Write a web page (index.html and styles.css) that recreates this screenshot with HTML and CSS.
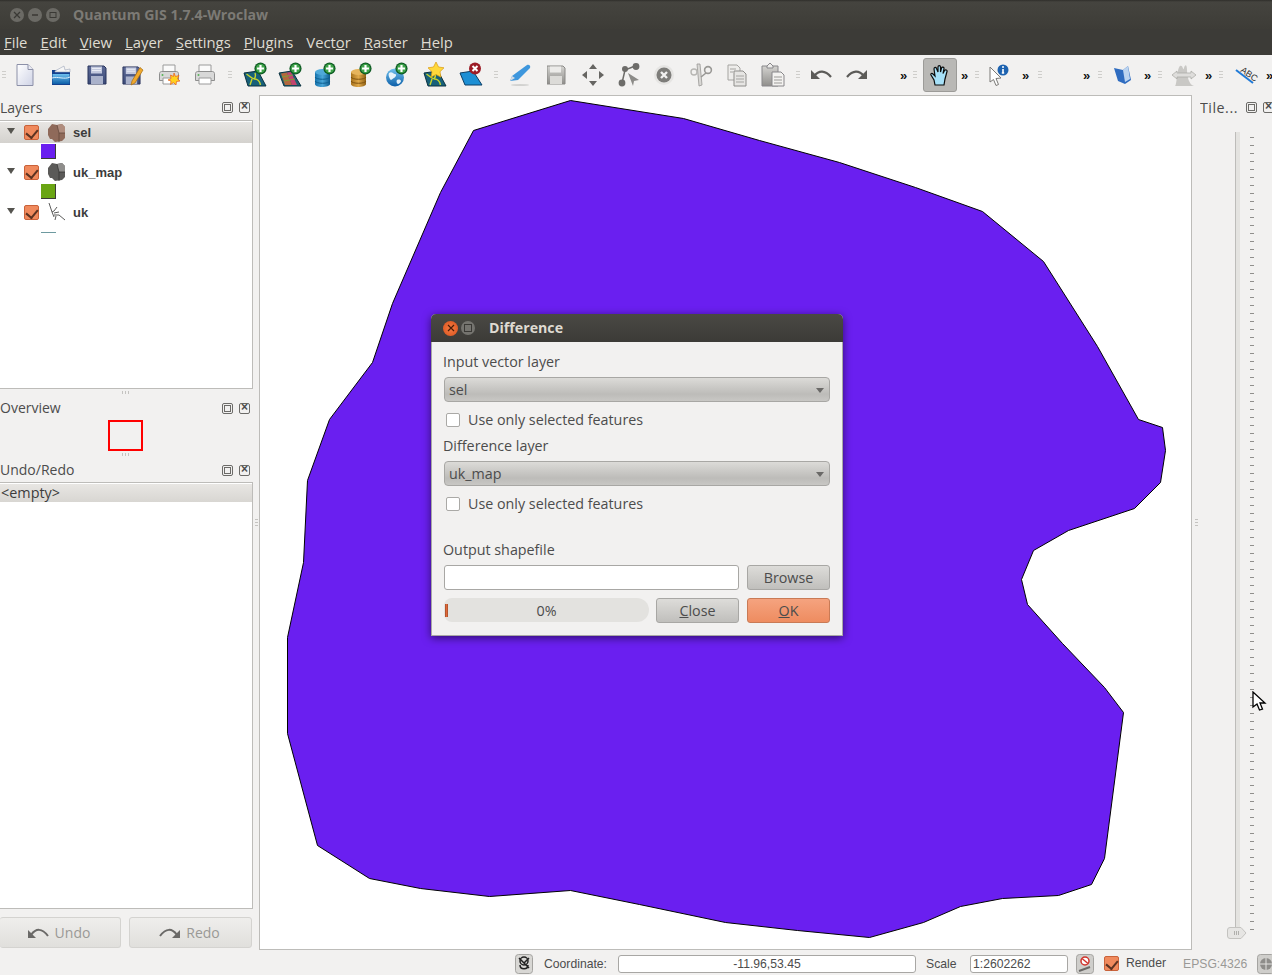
FILE: index.html
```html
<!DOCTYPE html>
<html lang="en">
<head>
<meta charset="utf-8">
<title>Quantum GIS 1.7.4-Wroclaw</title>
<link rel="stylesheet" href="styles.css">
</head>
<body>
<svg class="defs" width="0" height="0" aria-hidden="true">
  <defs>
    <linearGradient id="gBlue" x1="0" y1="0" x2="0" y2="1"><stop offset="0" stop-color="#6fc0ee"/><stop offset="1" stop-color="#0d5fa8"/></linearGradient>
    <linearGradient id="gCyl" x1="0" y1="0" x2="1" y2="0"><stop offset="0" stop-color="#1673ad"/><stop offset=".5" stop-color="#49a6d8"/><stop offset="1" stop-color="#0e5b8e"/></linearGradient>
    <linearGradient id="gOra" x1="0" y1="0" x2="1" y2="0"><stop offset="0" stop-color="#a8731d"/><stop offset=".5" stop-color="#e0a94a"/><stop offset="1" stop-color="#8f6014"/></linearGradient>
    <linearGradient id="gFlop" x1="0" y1="0" x2="0" y2="1"><stop offset="0" stop-color="#5d6a96"/><stop offset="1" stop-color="#3b4a78"/></linearGradient>
    <linearGradient id="gGray" x1="0" y1="0" x2="0" y2="1"><stop offset="0" stop-color="#d4d3d0"/><stop offset="1" stop-color="#8f8e8b"/></linearGradient>
    <linearGradient id="gPage" x1="0" y1="0" x2="1" y2="1"><stop offset="0" stop-color="#ffffff"/><stop offset="1" stop-color="#cfd3e6"/></linearGradient>
    <symbol id="plus" viewBox="0 0 12 12"><circle cx="6" cy="6" r="5.6" fill="#0f5c24"/><circle cx="6" cy="6" r="4.4" fill="#3fa34a"/><path d="M6 2.800v6.400M2.800 6h6.400" stroke="#fff" stroke-width="2"/></symbol>
    <symbol id="floppy" viewBox="0 0 20 20"><path d="M1 1h16l2 2v16H1z" fill="url(#gFlop)" stroke="#29345c"/><rect x="4" y="1.500" width="11" height="7" fill="#c3c9de"/><path d="M5 3.500h9M5 5.500h9" stroke="#e8ebf4"/><rect x="4" y="11" width="12" height="8" fill="#aab2cb"/></symbol>
    <symbol id="printer" viewBox="0 0 24 24"><path d="M6 2h12v8H6z" fill="#fafafa" stroke="#9a9a9a"/><path d="M2.500 10.500c0-1 1-2 2-2h15c1 0 2 1 2 2v7h-19z" fill="#d8d8d8" stroke="#8e8e8e"/><path d="M6 15h12v6H6z" fill="#fff" stroke="#9a9a9a"/><circle cx="5.500" cy="12" r="1" fill="#59b45a"/></symbol>
    <symbol id="map" viewBox="0 0 24 24"><path d="M1 9l14-2 8 15H5z" fill="#17607a" stroke="#0c3240"/><path d="M3.500 10c4 3 6 5 8 5s5 1 6 6M9 15l-2 6M12 9c1 3 0 5-1 6" stroke="#c8d52e" stroke-width="1.400" fill="none"/></symbol>
  </defs>
</svg>

<header class="titlebar">
  <span class="winbtn"><svg width="8" height="8" viewBox="0 0 8 8"><path d="M1 1l6 6M7 1l-6 6" stroke="#3a3935" stroke-width="1.300"/></svg></span>
  <span class="winbtn"><svg width="8" height="8" viewBox="0 0 8 8"><path d="M1 4h6" stroke="#3a3935" stroke-width="1.500"/></svg></span>
  <span class="winbtn"><svg width="8" height="8" viewBox="0 0 8 8"><rect x="1" y="1.500" width="6" height="5" fill="none" stroke="#3a3935"/></svg></span>
  <span class="wintitle">Quantum GIS 1.7.4-Wroclaw</span>
</header>

<nav class="menubar">
  <span><u>F</u>ile</span><span><u>E</u>dit</span><span><u>V</u>iew</span><span><u>L</u>ayer</span><span><u>S</u>ettings</span><span><u>P</u>lugins</span><span>Vect<u>o</u>r</span><span><u>R</u>aster</span><span><u>H</u>elp</span>
</nav>

<div class="toolbar">
  <span class="grip g-first"></span>
  <span class="tool"><svg width="24" height="24" viewBox="0 0 24 24"><path d="M4 1.500h11l5 5v16H4z" fill="url(#gPage)" stroke="#8c90a8"/><path d="M15 1.500v5h5" fill="#e9ebf4" stroke="#8c90a8"/></svg></span>
  <span class="tool"><svg width="24" height="24" viewBox="0 0 24 24"><path d="M3 7h6l2 2h10v13H3z" fill="#13418f"/><path d="M6 8l9-5 1 4 5-1v3H6z" fill="#f6f6f6" stroke="#9ba4b8" stroke-width=".6"/><path d="M3.500 11h17v10h-17z" fill="url(#gBlue)"/><path d="M3 15c6-2 12 2 18-1" stroke="#d9eefb" fill="none"/></svg></span>
  <span class="tool"><svg width="20" height="20" viewBox="0 0 20 20"><use href="#floppy"/></svg></span>
  <span class="tool"><svg width="24" height="24" viewBox="0 0 24 24"><use href="#floppy" x="1" y="3" width="19" height="19"/><path d="M11 18l-1 4 4-2 8-13-3-2.500z" fill="#f0a92e" stroke="#a66d10" stroke-width=".7"/></svg></span>
  <span class="tool"><svg width="24" height="24" viewBox="0 0 24 24"><use href="#printer"/><path d="M17 10l1.500 3.500 3.500-1-1.500 3.500 2.500 2-3.500.5-.5 3.500-2.500-2.500-3 2 .5-3.500-3-1 3-1.500-.5-3.500 3 1.500z" fill="#ffd21f" stroke="#e8591a" stroke-width=".7"/></svg></span>
  <span class="tool"><svg width="24" height="24" viewBox="0 0 24 24"><use href="#printer"/></svg></span>
  <span class="grip g-a"></span>
  <span class="tool"><svg width="26" height="26" viewBox="-1 0 26 26"><use href="#map" x="0" y="2" width="24" height="24"/><use href="#plus" x="11" y="0" width="13" height="13"/></svg></span>
  <span class="tool"><svg width="26" height="26" viewBox="0 0 26 26"><path d="M1 11l13-2 9 15H6z" fill="#1f5f70" stroke="#0c3240"/><path d="M3 11.500l6-1 5 12.500H7z" fill="#b3683e"/><path d="M9 10.500l4-.6 6 13-5 .1z" fill="#c2446e"/><path d="M4 15l11-2M6 19l11-2" stroke="#7f9c3a"/><use href="#plus" x="11" y="0" width="13" height="13"/></svg></span>
  <span class="tool"><svg width="26" height="26" viewBox="2 0 26 26"><path d="M3 10v12c0 2 3 3 7 3s8-1 8-3V10z" fill="url(#gCyl)"/><ellipse cx="10.500" cy="10" rx="7.500" ry="3" fill="#4fa9d9"/><path d="M3 15c1 3 14 3 15 0M3 19c1 3 14 3 15 0" stroke="#0d5e8f" fill="none"/><use href="#plus" x="11" y="0" width="13" height="13"/></svg></span>
  <span class="tool"><svg width="26" height="26" viewBox="2 0 26 26"><path d="M3 10v12c0 2 3 3 7 3s8-1 8-3V10z" fill="url(#gOra)"/><ellipse cx="10.500" cy="10" rx="7.500" ry="3" fill="#e6b45c"/><path d="M3 15c1 3 14 3 15 0M3 19c1 3 14 3 15 0" stroke="#7e520f" fill="none"/><use href="#plus" x="11" y="0" width="13" height="13"/></svg></span>
  <span class="tool"><svg width="26" height="26" viewBox="2 0 26 26"><circle cx="11" cy="15.500" r="9" fill="url(#gBlue)"/><path d="M5 11c3-2 4 1 6 1s1 3-1 4-3 3-4 1-2-4-1-6zM13 18c2-1 4 0 4 1s-2 3-3 3-2-3-1-4z" fill="#e6f2fa"/><use href="#plus" x="11" y="0" width="13" height="13"/></svg></span>
  <span class="tool"><svg width="26" height="26" viewBox="-1 0 26 26"><use href="#map" x="0" y="2" width="24" height="24"/><path d="M13 0l2.500 5 5.500.8-4 3.900 1 5.500-5-2.700-5 2.700 1-5.500-4-3.900 5.500-.8z" fill="#ffd83a" stroke="#d99a10" stroke-width=".7"/></svg></span>
  <span class="tool"><svg width="26" height="26" viewBox="-1 0 26 26"><path d="M1 11l13-2 9 14H6z" fill="#1d8fd4" stroke="#0c3f66"/><circle cx="16" cy="6.500" r="6" fill="#9c1c26"/><path d="M13.500 4l5 5M18.500 4l-5 5" stroke="#fff" stroke-width="2"/></svg></span>
  <span class="grip g-b"></span>
  <span class="tool"><svg width="26" height="26" viewBox="0 0 26 26"><ellipse cx="12" cy="23" rx="9" ry="1" fill="#d2d2d0"/><path d="M2 19l2-5L19 3c2-1 4 1 3 3L10 18z" fill="#3e97dd"/><path d="M2 19l2-5 3 2z" fill="#d6dce4"/></svg></span>
  <span class="tool"><svg width="20" height="20" viewBox="1 0 20 20"><path d="M1 1h16l2 2v16H1z" fill="url(#gGray)" stroke="#8a8986"/><rect x="4" y="1.500" width="11" height="6" fill="#ecebe9"/><rect x="4" y="11" width="12" height="8" fill="#dcdbd8"/></svg></span>
  <span class="tool"><svg width="24" height="24" viewBox="0 0 24 24"><path d="M12 1l4 5H8zM12 23l-4-5h8zM1 12l5-4v8zM23 12l-5 4V8z" fill="#666562"/></svg></span>
  <span class="tool"><svg width="24" height="24" viewBox="1 0 24 24"><path d="M6 20l3-13 10-4" stroke="#6d6c69" stroke-width="1.500" fill="none"/><circle cx="6" cy="20" r="3.400" fill="#6d6c69"/><circle cx="9" cy="6" r="3" fill="#6d6c69"/><circle cx="20" cy="3.500" r="3.400" fill="#6d6c69"/><path d="M12 10l11 7-5 1-1 5z" fill="#8c8b88"/></svg></span>
  <span class="tool"><svg width="22" height="22" viewBox="1 0 22 22"><circle cx="11" cy="11" r="10" fill="#e6e5e3"/><circle cx="11" cy="11" r="7.500" fill="#7e7d7a"/><path d="M8 8l6 6M14 8l-6 6" stroke="#f2f1f0" stroke-width="2.400"/></svg></span>
  <span class="tool"><svg width="24" height="24" viewBox="0 0 24 24"><path d="M8 1h3l2 21-3 1z" fill="#d9d8d5" stroke="#999895" stroke-width=".8"/><circle cx="19" cy="7" r="3.400" fill="none" stroke="#999895" stroke-width="1.600"/><path d="M12 14l5-4" stroke="#999895" stroke-width="1.600"/><circle cx="5" cy="9" r="3" fill="none" stroke="#b7b6b3" stroke-width="1.400"/></svg></span>
  <span class="tool"><svg width="24" height="24" viewBox="0 0 24 24"><path d="M3 2h9l3 3v12H3z" fill="#eeedeb" stroke="#a5a4a1"/><path d="M9 8h9l3 3v12H9z" fill="#e6e5e3" stroke="#8e8d8a"/><path d="M5 6h6M5 9h3M11 13h8M11 16h8M11 19h8" stroke="#a5a4a1"/></svg></span>
  <span class="tool"><svg width="26" height="26" viewBox="0 0 26 26"><path d="M2 4h16v20H2z" fill="url(#gGray)" stroke="#88878a"/><path d="M7 4l3-3 3 3v2H7z" fill="#eeedeb" stroke="#88878a"/><path d="M12 10h9l3 3v11H12z" fill="#f3f2f0" stroke="#88878a"/><path d="M14 15h8M14 18h8M14 21h8" stroke="#9b9a97"/></svg></span>
  <span class="grip g-c"></span>
  <span class="tool"><svg width="24" height="24" viewBox="0 0 24 24"><path d="M5 13c5-6 11-6 17 1" stroke="#5c5b58" stroke-width="2.200" fill="none"/><path d="M2 7v9h9z" fill="#5c5b58"/></svg></span>
  <span class="tool"><svg width="24" height="24" viewBox="0 0 24 24"><path d="M19 13c-5-6-11-6-17 1" stroke="#5c5b58" stroke-width="2.200" fill="none"/><path d="M22 7v9h-9z" fill="#5c5b58"/></svg></span>
  <span class="more m-a">»</span><span class="grip g-d"></span>
  <span class="tool tool-on"><svg width="20" height="22" viewBox="0 0 20 22"><path d="M5 21l-1-5-3-5c-.6-1.500 1-2 2-1l2 2-1-7c0-2 2-2 2.500-.5L8 8V3c0-1.800 2.500-1.800 2.500 0v5l1-4c.5-1.600 2.700-1 2.500.5l-1 5 1.500-3c1-1.400 3-.4 2.500 1L15 15l-1 6z" fill="#a6e0f7" stroke="#0b0b0b" stroke-width="1.200"/></svg></span>
  <span class="more m-b">»</span><span class="grip g-e"></span>
  <span class="tool tool-id"><svg width="22" height="22" viewBox="0 0 22 22"><path d="M2 3l11 11-5 .5 2.500 6-2.500 1-2.500-6L2 18z" fill="#fff" stroke="#7a7976"/><circle cx="15" cy="6" r="5.500" fill="#1e63b0"/><path d="M15 5v4M13.800 9h2.400" stroke="#fff" stroke-width="1.600"/><circle cx="15" cy="3" r="1" fill="#fff"/></svg></span>
  <span class="more m-c">»</span><span class="grip g-f"></span>
  <span class="more m-d">»</span><span class="grip g-g"></span>
  <span class="tool tool-sm"><svg width="20" height="20" viewBox="0 0 20 20"><path d="M1 3l9 2 5-4 3 14-6 4-7-3z" fill="#2f6cc0"/><path d="M10 5l5-4 2 13-5 3z" fill="#bcd4f0"/></svg></span>
  <span class="more m-e">»</span><span class="grip g-h"></span>
  <span class="tool tool-sm"><svg width="26" height="24" viewBox="0 0 26 24"><path d="M4 23c2-1 2-18 5-20s3 6 4 2 3-4 3 2 2 15 7 16z" fill="#c9c8c5"/><path d="M1 12l5-4v2h14V8l5 4-5 4v-2H6v2z" fill="#dedddb" stroke="#a8a7a4" stroke-width=".7"/></svg></span>
  <span class="more m-f">»</span><span class="grip g-i"></span>
  <span class="tool tool-sm"><svg class="over" width="24" height="20" viewBox="0 0 24 20"><text class="abc" transform="rotate(35 16 9)" x="7" y="12">ABC</text><path d="M3 5l17 13" stroke="#1f7ad8" stroke-width="2"/></svg></span>
  <span class="more m-g">»</span>
</div>

<main class="workspace">
  <aside class="leftdock">
    <div class="docktitle"><span>Layers</span><span class="dockbtns"><i class="dbtn dfloat"></i><i class="dbtn dclose"></i></span></div>
    <div class="tree">
      <div class="row selrow"><i class="twist"></i><i class="check"></i><svg class="lyr" width="20" height="20" viewBox="0 0 20 20"><path d="M1 6l4-5 5 1 5-1 3 3v11l-3 3-7 1-3-3H3l-2-4z" fill="#8f6a5a"/><path d="M10 2l5-1 3 3v6h-6z" fill="#b08d7e"/><path d="M10 2l2 8 0 9M12 10l6 0" stroke="#5d4338" fill="none" stroke-width=".7"/></svg><b>sel</b></div>
      <div class="row"><i class="swatch sw-purple"></i></div>
      <div class="row"><i class="twist"></i><i class="check"></i><svg class="lyr" width="20" height="20" viewBox="0 0 20 20"><path d="M1 6l4-5 5 1 5-1 3 3v11l-3 3-7 1-3-3H3l-2-4z" fill="#5b5a58"/><path d="M10 2l5-1 3 3v6h-6z" fill="#8f8e8c"/><path d="M10 2l2 8 0 9M12 10l6 0" stroke="#2f2e2d" fill="none" stroke-width=".7"/></svg><b>uk_map</b></div>
      <div class="row"><i class="swatch sw-green"></i></div>
      <div class="row"><i class="twist"></i><i class="check"></i><svg class="lyr" width="20" height="20" viewBox="0 0 20 20"><path d="M2 1l3 9 2 5M5 10l2-1 3-4M7 11l5-1M7 13l5 0 6 5M9 14l-1 4" stroke="#4a4a48" stroke-width=".9" fill="none"/></svg><b>uk</b></div>
      <div class="row"><i class="line-sym"></i></div>
    </div>
    <div class="hsplit"></div>
    <div class="docktitle t-b"><span class="dockname">Overview</span><span class="dockbtns"><i class="dbtn dfloat"></i><i class="dbtn dclose"></i></span></div>
    <div class="overview"><i class="extent"></i></div>
    <div class="hsplit"></div>
    <div class="docktitle t-b"><span class="dockname">Undo/Redo</span><span class="dockbtns"><i class="dbtn dfloat"></i><i class="dbtn dclose"></i></span></div>
    <div class="undolist"><div class="undorow">&lt;empty&gt;</div></div>
    <div class="undobtns">
      <span class="ubtn ub-undo"><svg width="22" height="14" viewBox="0 0 22 14"><path d="M4 9c5-7 11-7 17 1" stroke="#6a6967" stroke-width="2" fill="none"/><path d="M1 4v8h8z" fill="#6a6967"/></svg>Undo</span>
      <span class="ubtn ub-redo"><svg width="22" height="14" viewBox="0 0 22 14"><path d="M18 9C13 2 7 2 1 10" stroke="#6a6967" stroke-width="2" fill="none"/><path d="M21 4v8h-8z" fill="#6a6967"/></svg>Redo</span>
    </div>
  </aside>
  <div class="vsplit"><i></i></div>
  <section class="canvas">
    <svg class="mapsvg" viewBox="260.500 95.500 931 853" width="931" height="853">
      <polygon fill="#6a1ff0" stroke="#000" stroke-width="1" points="571,100 684,118 760,140 840,162 916,187 983,211 1044,261 1098,346 1139,419 1163,427 1166,450 1161,482 1135,508 1069,530 1034,550 1022,579 1028,604 1063,643 1105,687 1124,712 1105,858 1092,884 1059,895 1003,898 961,906 924,922 870,937 798,930 726,922 640,904 571,890 490,896 421,888 370,878 318,845 288,733 288,637 304,562 308,480 330,419 373,362 393,303 441,192 474,130"/>
    </svg>
    <div class="dialog">
      <div class="dlgtitle">
        <span class="dlgclose"><svg width="8" height="8" viewBox="0 0 8 8"><path d="M1 1l6 6M7 1l-6 6" stroke="#4a1c08" stroke-width="1.200"/></svg></span>
        <span class="dlgmax"><svg width="8" height="8" viewBox="0 0 8 8"><rect x=".5" y=".5" width="7" height="7" fill="none" stroke="#3a3935"/></svg></span>
        <span class="dlgname">Difference</span>
      </div>
      <div class="dlgbody">
        <div class="lbl">Input vector layer</div>
        <div class="combo">sel<i class="arrow"></i></div>
        <div class="chk"><i class="box"></i>Use only selected features</div>
        <div class="lbl">Difference layer</div>
        <div class="combo">uk_map<i class="arrow"></i></div>
        <div class="chk"><i class="box"></i>Use only selected features</div>
        <div class="lbl lbl-out">Output shapefile</div>
        <div class="dlgrow r-out"><span class="input"></span><span class="btn">Browse</span></div>
        <div class="dlgrow r-act"><span class="progress"><i class="pchunk"></i>0%</span><span class="btn"><u>C</u>lose</span><span class="btn ok"><u>O</u>K</span></div>
      </div>
    </div>
  </section>
  <div class="vsplit vs-r"><i></i></div>
  <aside class="rightdock">
    <div class="docktitle t-r"><span class="tiletxt">Tile...</span><span class="dockbtns"><i class="dbtn dfloat"></i><i class="dbtn dclose"></i></span></div>
    <div class="slider"><i class="groove"></i><i class="ticks"></i>
      <svg class="handle" width="20" height="12" viewBox="0 0 20 12"><path d="M3 .5h11L19 6l-5 5.500H3Q.5 11.500 .5 9V3Q.5 .5 3 .5z" fill="#e6e5e3" stroke="#c4c3c0"/><path d="M7.500 4v4M9.500 4v4M11.500 4v4" stroke="#b0afac"/></svg>
    </div>
    <svg class="cursor" width="16" height="21" viewBox="0 0 16 21"><path d="M1 1v15l4-3 2.500 6 3-1-2.500-6h5z" fill="#fff" stroke="#000" stroke-width="1.300"/></svg>
  </aside>
</main>

<footer class="statusbar">
  <svg class="st-ico" width="18" height="20" viewBox="0 0 18 20"><rect x=".5" y=".5" width="17" height="19" rx="3" fill="#d8d7d4" stroke="#a5a4a1"/><circle cx="9" cy="7" r="4" fill="none" stroke="#222" stroke-width="1.500"/><path d="M4 4l10 10M14 4l-5 5M5 11c0 5 8 5 8 0" stroke="#222" stroke-width="1.500" fill="none"/></svg>
  <span class="st-lbl s-coord">Coordinate:</span>
  <span class="st-in s-cin">-11.96,53.45</span>
  <span class="st-lbl s-scale">Scale</span>
  <span class="st-in s-sin">1:2602262</span>
  <svg class="st-ico s-stop" width="18" height="20" viewBox="0 0 18 20"><rect x=".5" y=".5" width="17" height="19" rx="3" fill="#cfcecb" stroke="#a5a4a1"/><path d="M3 17l11-4" stroke="#6a6967" stroke-width="2"/><circle cx="9" cy="7" r="4" fill="#fff" stroke="#d0342c" stroke-width="1.500"/><path d="M6 4.500l6 5" stroke="#d0342c" stroke-width="1.500"/></svg>
  <i class="check s-chk"></i>
  <span class="st-lbl s-render">Render</span>
  <span class="s-epsg">EPSG:4326</span>
  <svg class="st-ico s-globe" width="18" height="20" viewBox="0 0 18 20"><rect x=".5" y=".5" width="17" height="19" rx="3" fill="#cfcecb" stroke="#a5a4a1"/><circle cx="9" cy="10" r="6" fill="#8e8d8a"/><path d="M3 10h12M9 4v12" stroke="#e4e3e1"/></svg>
</footer>
</body>
</html>
```

FILE: styles.css
```css
* { box-sizing: border-box; }
html, body { margin: 0; height: 100%; }
body {
  width: 1272px; height: 975px; overflow: hidden;
  display: flex; flex-direction: column;
  background: #f2f1f0; color: #4c4c4c;
  font-family: "Open Sans", "Noto Sans", sans-serif; font-size: 14px;
}
i { display: block; font-style: normal; }
.defs { position: absolute; }

.titlebar {
  height: 29px; flex: none; display: flex; align-items: center;
  padding: 1px 0 0 10px; gap: 4px;
  background: linear-gradient(#2f2e2a 0, #45443f 2px, #3d3c37 100%);
}
.winbtn {
  width: 14px; height: 14px; border-radius: 50%; background: #6b6a65;
  display: flex; align-items: center; justify-content: center;
}
.wintitle { margin: 0 0 1px 9px; font-weight: 700; color: #7c7a75; font-size: 14.100px; }

.menubar {
  height: 26px; flex: none; display: flex; align-items: center; gap: 13px;
  padding: 0 0 0 4px; background: #3c3b37; color: #dfdbd2; font-size: 14.800px;
}

.toolbar {
  height: 40px; flex: none; display: flex; align-items: center;
  background: #f2f1f0; overflow: hidden;
}
.tool { width: 36px; height: 34px; flex: none; display: flex; align-items: center; justify-content: center; }
.tool-on {
  width: 34px; border-radius: 3px;
  background: #b9b8b5; border: 1px solid #9c9b98;
}
.tool-id { width: 22px; }
.tool-sm { width: 26px; }
.over { overflow: visible; }
.grip {
  flex: none; height: 9px; width: 4px;
  background: repeating-linear-gradient(#cfcecb 0 1px, transparent 1px 3px);
}
.g-first { margin: 0 1px 0 2px; }
.g-a { margin: 0 5px; }
.g-b { margin: 0 5px 0 5px; }
.g-c { margin: 0 3px 0 5px; }
.g-d { margin: 0 6px 0 5px; }
.g-e { margin: 0 9px 0 6px; }
.g-f { margin: 0 0 0 8px; }
.g-g { margin: 0 8px 0 7px; }
.g-h { margin: 0 9px 0 6px; }
.g-i { margin: 0 9px 0 6px; }
.more { flex: none; width: 8px; color: #111; font: 700 13px/1 "Liberation Sans", sans-serif; }
.m-a { margin-left: 25px; }
.m-b { margin-left: 4px; }
.m-c { margin-left: 12px; }
.m-d { margin-left: 41px; }
.m-e { margin-left: 8px; }
.m-f { margin-left: 8px; }
.m-g { margin-left: 8px; }
.abc { font: 9px "Liberation Sans", sans-serif; fill: #333; }

.workspace { flex: 1; display: flex; min-height: 0; }
.leftdock { width: 253px; flex: none; display: flex; flex-direction: column; }
.rightdock { position: relative; flex: 1; min-width: 0; display: flex; flex-direction: column; }
.docktitle {
  height: 25px; flex: none; display: flex; align-items: center; justify-content: space-between;
  color: #4c4c4c; font-size: 14px;
}
.t-b { height: 24px; }
.dockname { margin-bottom: 2px; }
.t-r { overflow: hidden; }
.tiletxt { font-size: 14.300px; letter-spacing: .5px; }
.dockbtns { display: flex; gap: 6px; padding-right: 3px; }
.t-r .dockbtns { padding-right: 0; margin-right: -2px; }
.dbtn { width: 11px; height: 11px; border: 1px solid #6c6b68; border-radius: 2px; position: relative; }
.dfloat::after { content: ""; position: absolute; left: 1px; bottom: 1px; width: 5px; height: 5px; border: 1px solid #6c6b68; background: #f2f1f0; }
.dfloat::before { content: ""; position: absolute; right: 1px; top: 1px; width: 5px; height: 5px; border: 1px solid #6c6b68; }
.dclose::after { content: "×"; position: absolute; inset: -3px 0 0 0; text-align: center; font: 700 12px/13px "Liberation Sans", sans-serif; color: #4c4c4c; }

.tree {
  height: 269px; flex: none; background: #fff;
  border: 1px solid #bdbcb9; border-left: 0; padding-top: 1px;
}
.row { height: 20px; display: flex; align-items: center; position: relative; color: #3c3c3c; }
.row b { font: 700 13px "Liberation Sans", sans-serif; margin-left: 6px; }
.selrow { height: 21px; background: linear-gradient(#e8e6e3, #d4d2ce); margin-bottom: -1px; }
.twist { width: 0; height: 0; margin: 0 0 3px 7px; border: 4px solid transparent; border-top: 6px solid #55544f; border-bottom: 0; }
.check {
  width: 15px; height: 15px; margin-left: 9px; flex: none; border-radius: 2px; position: relative;
  background: #f08a5d; border: 1px solid #c9623a;
}
.check::after {
  content: ""; position: absolute; left: 3px; top: 1px; width: 6px; height: 9px;
  border: solid #5c3322; border-width: 0 2px 2px 0; transform: rotate(40deg);
}
.lyr { margin-left: 8px; flex: none; }
.swatch { width: 15px; height: 15px; margin: 0 0 2px 41px; border: 1px solid #3c3b37; border-width: 0 1px 1px 0; }
.sw-purple { background: #6a1ff0; }
.sw-green { background: #6aa513; }
.line-sym { width: 15px; height: 1px; margin: 0 0 0 41px; background: #6d9aa0; }
.hsplit { height: 7px; flex: none; position: relative; }
.hsplit::after { content: ""; position: absolute; left: 122px; top: 2px; width: 7px; height: 3px; background: repeating-linear-gradient(90deg, #c4c3c0 0 1px, transparent 1px 3px); }
.overview { height: 31px; flex: none; display: flex; justify-content: center; padding-right: 2px; }
.extent { width: 35px; height: 31px; border: 2px solid #f00; }
.undolist { flex: 1; background: #fff; border: 1px solid #bdbcb9; border-left: 0; padding-top: 1px; min-height: 0; }
.undorow { height: 18px; line-height: 17px; padding-left: 1px; font-size: 14.400px; color: #3c3c3c; background: linear-gradient(#e8e6e3, #d8d6d2); }
.undobtns { height: 41px; flex: none; display: flex; gap: 8px; padding: 8px 0 2px 0; }
.ubtn {
  height: 31px; display: flex; align-items: center; justify-content: center; gap: 5px;
  color: #9a9996; border: 1px solid #d4d3d0; border-radius: 3px;
  background: linear-gradient(#efeeec, #e0dfdc);
}
.ub-undo { width: 121px; border-left: 0; gap: 6px; padding-right: 3px; }
.ub-redo { width: 123px; padding-right: 2px; }

.vsplit { width: 6px; flex: none; display: flex; align-items: center; justify-content: center; }
.vsplit i { width: 3px; height: 7px; background: repeating-linear-gradient(#c4c3c0 0 1px, transparent 1px 3px); }
.vs-r { width: 8px; }

.canvas { width: 933px; flex: none; position: relative; background: #fff; border: 1px solid #bdbcb9; overflow: hidden; }
.mapsvg { display: block; }
.dialog {
  position: absolute; left: 171px; top: 218px; width: 412px; height: 322px;
  display: flex; flex-direction: column; background: #f2f1f0; font-size: 14.300px;
  border-radius: 5px 5px 0 0; box-shadow: 0 2px 9px rgba(0,0,0,.55);
}
.dlgtitle {
  height: 28px; flex: none; display: flex; align-items: center; padding-left: 12px;
  background: linear-gradient(#4a4944, #3c3b37); border-radius: 5px 5px 0 0;
}
.dlgclose { width: 15px; height: 15px; border-radius: 50%; background: radial-gradient(#f57c43, #d8501c); display: flex; align-items: center; justify-content: center; }
.dlgmax { width: 14px; height: 14px; margin-left: 3px; border-radius: 50%; background: #75746f; display: flex; align-items: center; justify-content: center; }
.dlgname { margin: 0 0 2px 14px; font-weight: 700; color: #dfdbd2; font-size: 14.200px; }
.dlgbody { flex: 1; padding: 0 12px 0 11px; border: 1px solid #a9a8a5; border-top: 0; }
.lbl { height: 20px; margin-top: 10px; line-height: 20px; color: #4c4c4c; }
.combo {
  height: 25px; margin: 5px 0 0 1px; padding-left: 4px; line-height: 23px; position: relative;
  border: 1px solid #a8a7a4; border-radius: 4px; color: #4c4c4c;
  background: linear-gradient(#dcdbd8, #bdbcb9 70%, #c8c7c4);
}
.arrow { position: absolute; right: 5px; top: 10px; width: 0; height: 0; border: 4px solid transparent; border-top: 5px solid #6a6967; border-bottom: 0; }
.chk { height: 20px; margin-top: 8px; display: flex; align-items: center; line-height: 20px; }
.box { width: 14px; height: 14px; margin: 0 8px 0 3px; background: #fff; border: 1px solid #aaa9a6; border-radius: 2px; }
.chk + .lbl { margin-top: 6px; }
.chk + .lbl-out { margin-top: 26px; }
.dlgrow { display: flex; gap: 8px; margin: 5px 0 0 1px; }
.r-act { margin-top: 8px; gap: 7px; }
.input { width: 295px; height: 25px; background: #fff; border: 1px solid #a8a7a4; border-radius: 3px; }
.btn {
  width: 83px; height: 25px; display: flex; align-items: center; justify-content: center;
  border: 1px solid #a8a7a4; border-radius: 3px; color: #4c4c4c;
  background: linear-gradient(#dddcd9, #c0bfbc);
}
.r-act .btn:last-child { margin-left: 1px; }
.ok { background: linear-gradient(#f5a37f, #ee8c60); border-color: #c97a55; }
.progress {
  width: 205px; height: 24px; position: relative; border-radius: 8px 12px 12px 8px;
  background: #e3e2df; display: flex; align-items: center; justify-content: center; color: #4c4c4c;
}
.pchunk { position: absolute; left: 1px; top: 6px; width: 3px; height: 13px; background: #e0693a; border: 1px solid #b5552e; border-width: 0 1px; }

.slider { flex: 1; position: relative; }
.groove { position: absolute; left: 35px; top: 12px; bottom: 12px; width: 5px; border-left: 1px solid #bdbcb9; background: #e4e3e0; }
.ticks { position: absolute; left: 50px; top: 17px; bottom: 16px; width: 4px; background: repeating-linear-gradient(#908f8c 0 1px, transparent 1px 8px); }
.handle { position: absolute; left: 27px; bottom: 11px; }
.cursor { position: absolute; left: 52px; top: 596px; }

.statusbar { height: 25px; flex: none; display: flex; align-items: center; padding: 2px 0 0 515px; font: 12.200px "Liberation Sans", sans-serif; color: #4c4c4c; overflow: hidden; }
.st-ico { flex: none; }
.st-lbl { flex: none; }
.st-in { flex: none; height: 18px; background: #fff; border: 1px solid #a8a7a4; border-radius: 3px; line-height: 16px; }
.s-coord { margin-left: 11px; width: 74px; }
.s-cin { width: 298px; text-align: center; }
.s-scale { margin-left: 10px; width: 44px; }
.s-sin { width: 98px; padding-left: 2px; }
.s-stop { margin-left: 8px; }
.s-chk { margin-left: 10px; }
.s-render { margin: -2px 0 0 7px; width: 41px; }
.s-epsg { margin-left: 16px; color: #9a9996; flex: none; width: 65px; }
.s-globe { margin-left: 9px; }
```
